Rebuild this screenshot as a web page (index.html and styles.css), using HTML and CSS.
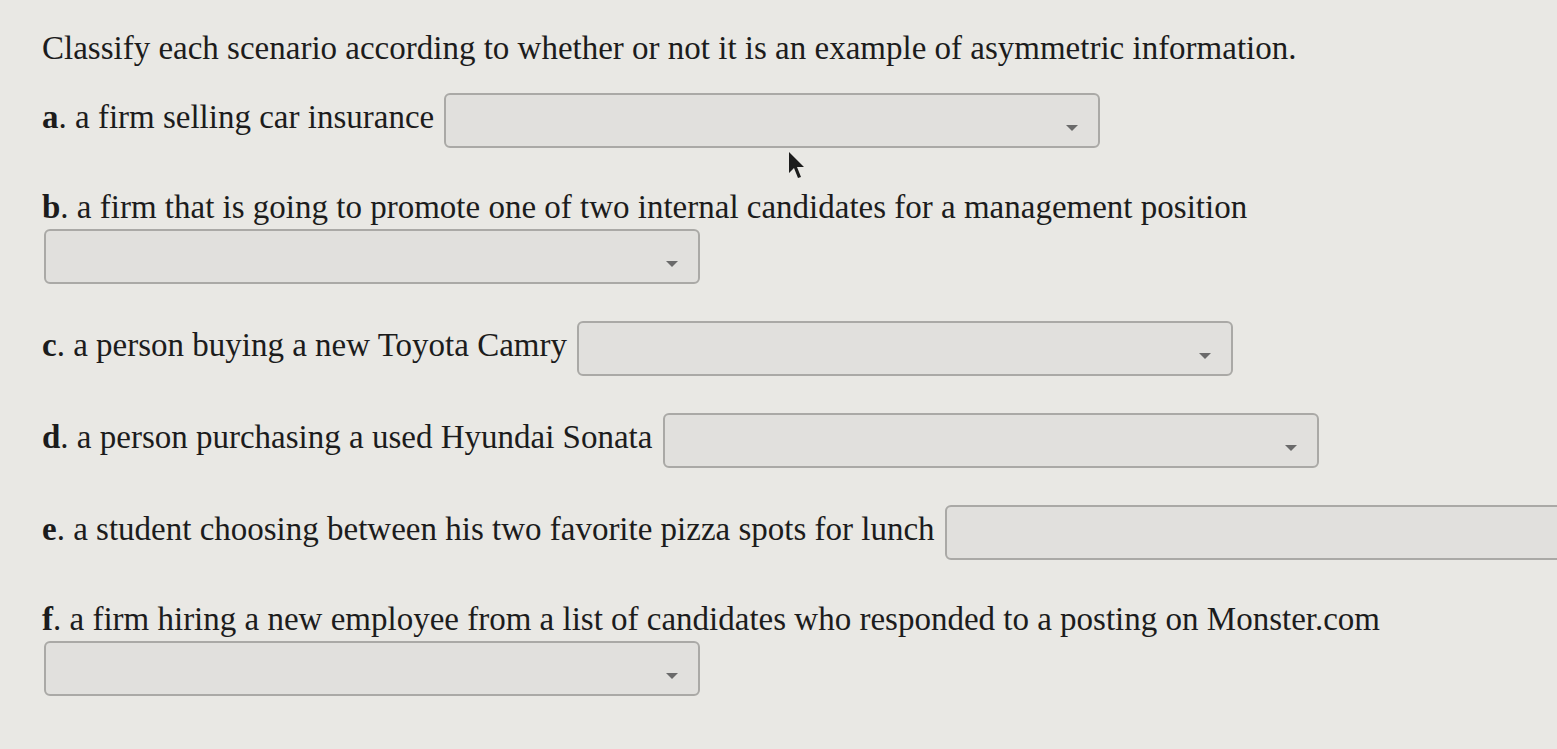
FILE: index.html
```html
<!DOCTYPE html>
<html lang="en">
<head>
  <meta charset="UTF-8">
  <title>Asymmetric Information</title>
  <link rel="stylesheet" href="styles.css">
</head>
<body>

<section class="question">
  <p class="prompt">Classify each scenario according to whether or not it is an example of asymmetric information.</p>

  <p class="item"><b>a</b>. a firm selling car insurance <span class="pick"><i class="caret"></i></span></p>
  <p class="item"><b>b</b>. a firm that is going to promote one of two internal candidates for a management position <span class="pick"><i class="caret"></i></span></p>
  <p class="item"><b>c</b>. a person buying a new Toyota Camry <span class="pick"><i class="caret"></i></span></p>
  <p class="item"><b>d</b>. a person purchasing a used Hyundai Sonata <span class="pick"><i class="caret"></i></span></p>
  <p class="item"><b>e</b>. a student choosing between his two favorite pizza spots for lunch <span class="pick"><i class="caret"></i></span></p>
  <p class="item"><b>f</b>. a firm hiring a new employee from a list of candidates who responded to a posting on Monster.com <span class="pick"><i class="caret"></i></span></p>
</section>

<!-- mouse pointer caught in the shot -->
<svg class="pointer" width="18" height="30" viewBox="0 0 18 30">
  <path d="M2 1 L2 22 L7 17 L11 27 L14 26 L10 16 L17 16 Z" fill="#1c1c1c"/>
</svg>

</body>
</html>
```

FILE: styles.css
```css
* { box-sizing: border-box; }
body {
  margin: 0;
  background: #e9e8e4;
  font-family: "Liberation Serif", "Times New Roman", serif;
  color: #1c1c1c;
  overflow: hidden;
}
.question {
  width: 1660px;
  padding: 27px 0 0 42px;
}
.prompt {
  font-size: 33px;
  line-height: 42px;
  margin: 0 0 24px;
}
.item {
  font-size: 33px;
  line-height: 44px;
  margin: 0 0 37px;
}
.item b { font-weight: bold; }
.pick {
  display: inline-block;
  position: relative;
  width: 656px;
  height: 55px;
  margin-left: 2px;
  vertical-align: middle;
  background: #e1e0dd;
  border: 2px solid #aaa9a6;
  border-radius: 6px;
}
.caret {
  position: absolute;
  right: 20px;
  top: 30px;
  border-left: 6px solid transparent;
  border-right: 6px solid transparent;
  border-top: 6px solid #6a6a6a;
}
.pointer {
  position: absolute;
  left: 787px;
  top: 151px;
}
```
